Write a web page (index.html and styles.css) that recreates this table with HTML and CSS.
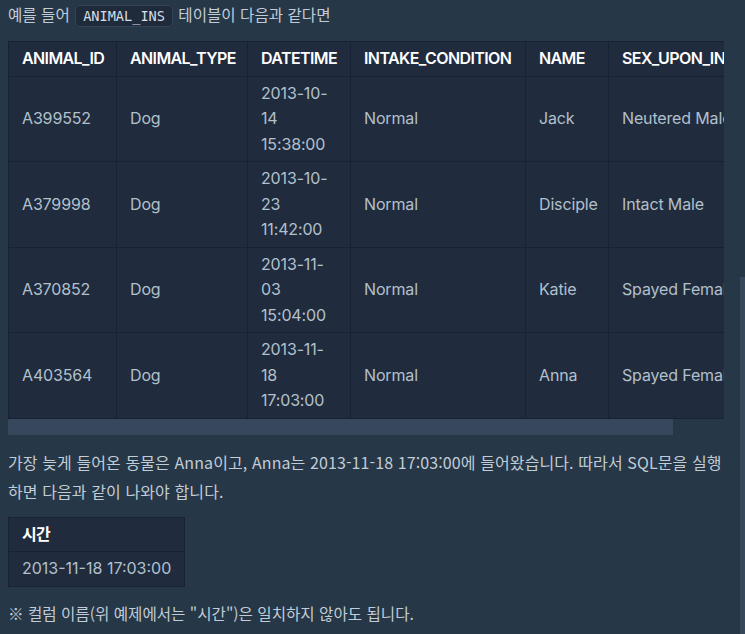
FILE: index.html
```html
<!DOCTYPE html>
<html lang="ko">
<head>
<meta charset="utf-8">
<title>ANIMAL_INS</title>
<link rel="stylesheet" href="styles.css">
</head>
<body>
<div class="page">
  <div class="content">
    <p class="intro">예를 들어 <code>ANIMAL_INS</code> 테이블이 다음과 같다면</p>
    <div class="table-scroll">
      <table class="data wide">
        <colgroup>
          <col class="c-id"><col class="c-type"><col class="c-date"><col class="c-cond"><col class="c-name"><col class="c-sex">
        </colgroup>
        <thead>
          <tr><th>ANIMAL_ID</th><th>ANIMAL_TYPE</th><th>DATETIME</th><th>INTAKE_CONDITION</th><th>NAME</th><th>SEX_UPON_INTAKE</th></tr>
        </thead>
        <tbody>
          <tr><td>A399552</td><td>Dog</td><td>2013-10-14 15:38:00</td><td>Normal</td><td>Jack</td><td>Neutered Male</td></tr>
          <tr><td>A379998</td><td>Dog</td><td>2013-10-23 11:42:00</td><td>Normal</td><td>Disciple</td><td>Intact Male</td></tr>
          <tr><td>A370852</td><td>Dog</td><td>2013-11-03 15:04:00</td><td>Normal</td><td>Katie</td><td>Spayed Female</td></tr>
          <tr><td>A403564</td><td>Dog</td><td>2013-11-18 17:03:00</td><td>Normal</td><td>Anna</td><td>Spayed Female</td></tr>
        </tbody>
      </table>
    </div>
    <div class="hscroll"><div class="hscroll-thumb"></div></div>
    <p class="para">가장 늦게 들어온 동물은 Anna이고, Anna는 2013-11-18 17:03:00에 들어왔습니다. 따라서 SQL문을 실행하면 다음과 같이 나와야 합니다.</p>
    <table class="data result">
      <thead><tr><th>시간</th></tr></thead>
      <tbody><tr><td>2013-11-18 17:03:00</td></tr></tbody>
    </table>
    <p class="note">※ 컬럼 이름(위 예제에서는 "시간")은 일치하지 않아도 됩니다.</p>
  </div>
  <div class="vscroll"><div class="vscroll-thumb"></div></div>
</div>
</body>
</html>
```
FILE: styles.css
```css
html, body {
  margin: 0;
  padding: 0;
  background: #263747;
}

.page {
  display: flex;
  height: 100vh;
  overflow: hidden;
}

.content {
  flex: 1;
  min-width: 0;
  padding: 0 16px 0 8px;
  color: #b2c0cc;
  font-family: Inter, "Noto Sans CJK KR", sans-serif;
  font-size: 16px;
}

.vscroll {
  flex: none;
  width: 5px;
}
.vscroll-thumb {
  margin-top: 277px;
  height: 357px;
  background: #37485c;
}

.intro,
.note {
  margin: 0;
  font-family: "Noto Sans CJK KR", sans-serif;
  font-size: 15.6px;
  line-height: 28px;
  height: 28px;
  color: #c2ccd6;
}

.intro code {
  font-family: "DejaVu Sans Mono", monospace;
  font-size: 13.6px;
  line-height: 16px;
  color: #d6dee6;
  background: #1f2a3a;
  border: 1px solid #33445a;
  border-radius: 4px;
  padding: 2px 7px;
  margin: 0 1px;
}

.table-scroll {
  margin-top: 13px;
  overflow: hidden;
}

.hscroll {
  height: 16px;
}
.hscroll-thumb {
  width: 665px;
  height: 16px;
  background: #37485c;
}

.data {
  border-collapse: collapse;
  background: #202b3d;
}

.wide {
  table-layout: fixed;
  width: 771px;
}
.c-id { width: 108px; }
.c-type { width: 131px; }
.c-date { width: 103px; }
.c-cond { width: 175px; }
.c-name { width: 83px; }
.c-sex { width: 171px; }

.data th,
.data td {
  border: 1px solid #172334;
  padding: 4px 13px;
  line-height: 25.5px;
  text-align: left;
  vertical-align: middle;
  overflow: hidden;
}

.data th {
  color: #ffffff;
  font-weight: 600;
  letter-spacing: -0.6px;
  white-space: nowrap;
}

.data td {
  color: #b2c0cc;
  font-weight: 400;
}

.wide td {
  letter-spacing: -0.15px;
}

.para {
  margin: 13px 0 0;
  font-family: "Noto Sans CJK KR", sans-serif;
  font-size: 16px;
  line-height: 29px;
  color: #c2ccd6;
  letter-spacing: 0.1px;
}

.result {
  margin-top: 11px;
}

.note {
  margin-top: 12px;
}
```
